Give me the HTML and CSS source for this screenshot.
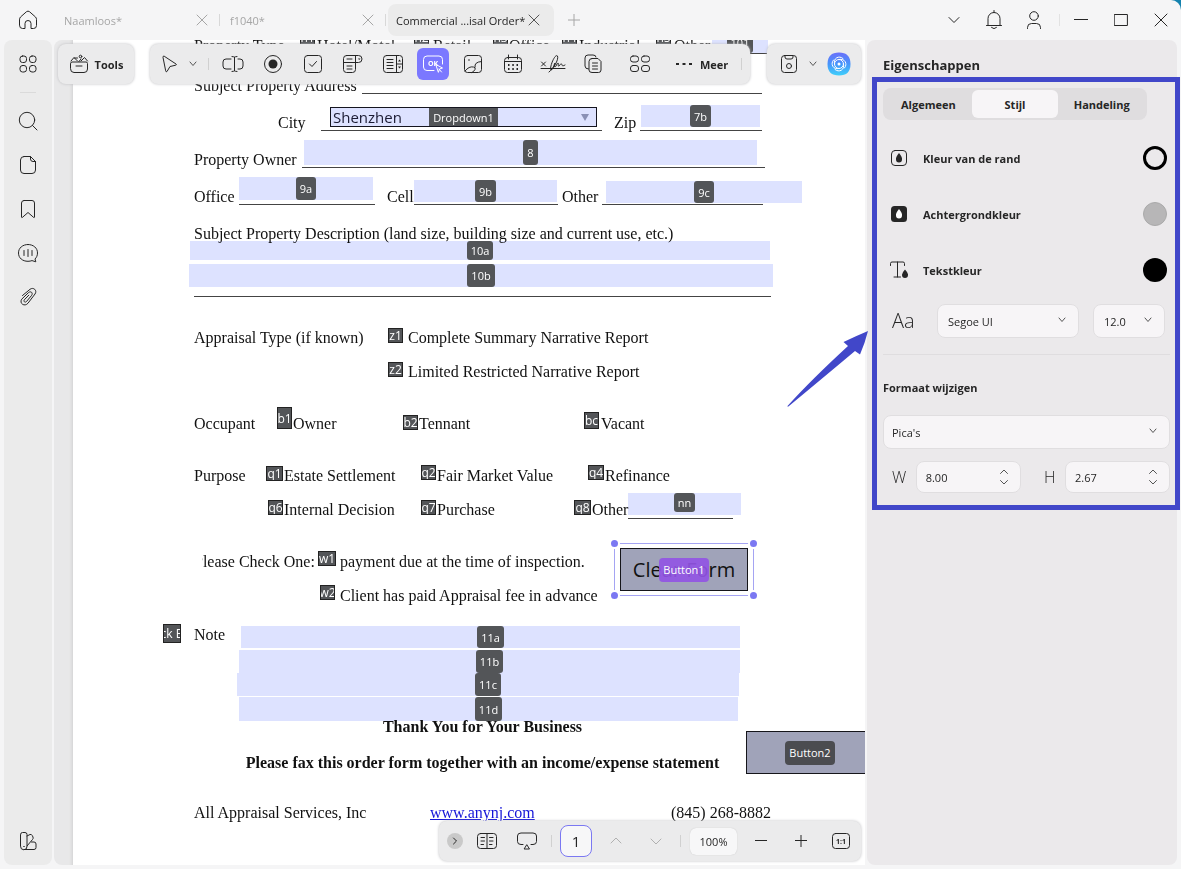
FILE: index.html
```html
<!DOCTYPE html>
<html lang="nl">
<head>
    <meta charset="UTF-8">
    <meta name="viewport" content="width=device-width, initial-scale=1.0">
    <title>Commercial Appraisal Order</title>
    <link rel="stylesheet" href="styles.css">
</head>
<body>
    <div class="window">
        <header class="titlebar">
            <button class="icon-btn home" aria-label="Home">
                <svg width="20" height="20" viewBox="0 0 20 20"><path d="M1.500 9.500Q1.500 8 2.500 7L8.500 1.700q1.500-1.200 3 0L17.500 7q1 1 1 2.500V15.500q0 3-3 3H13V13.500a3 3 0 0 0-6 0V18.500H4.500q-3 0-3-3z"/></svg>
            </button>
            <nav class="tabs">
                <div class="tab first"><span>Naamloos*</span><button aria-label="Sluiten"><svg width="12" height="12" viewBox="0 0 12 12"><path d="M1 1l10 10M11 1L1 11"/></svg></button></div>
                <div class="tab"><span>f1040*</span><button aria-label="Sluiten"><svg width="12" height="12" viewBox="0 0 12 12"><path d="M1 1l10 10M11 1L1 11"/></svg></button></div>
                <div class="tab active"><span>Commercial ...isal Order*</span><button aria-label="Sluiten"><svg width="12" height="12" viewBox="0 0 12 12"><path d="M1 1l10 10M11 1L1 11"/></svg></button></div>
                <button class="new-tab" aria-label="Nieuw tabblad"><svg width="12" height="12" viewBox="0 0 12 12"><path d="M6 0v12M0 6h12"/></svg></button>
            </nav>
            <div class="window-actions">
                <button class="icon-btn" aria-label="Meer"><svg width="12" height="12" viewBox="0 0 12 12"><path d="M1 3.500l5 5 5-5"/></svg></button>
                <button class="icon-btn" aria-label="Meldingen"><svg width="18" height="20" viewBox="0 0 18 20"><path d="M9 .5v2M3 15V8.500a6 6 0 0 1 12 0V15M1.500 15.500h15M6.500 17.500q2.500 2.500 5 0"/></svg></button>
                <button class="icon-btn" aria-label="Account"><svg width="16" height="20" viewBox="0 0 16 20"><circle cx="8" cy="6" r="4.300"/><path d="M1.500 18.500v-1q0-4 4-4h5q4 0 4 4v1"/></svg></button>
                <span class="sep"></span>
                <button class="icon-btn" aria-label="Minimaliseren"><svg width="14" height="14" viewBox="0 0 14 14"><path d="M0 6.500h14"/></svg></button>
                <button class="icon-btn" aria-label="Maximaliseren"><svg width="14" height="14" viewBox="0 0 14 14"><path d="M.6 1.500h12.800v11H.6z"/></svg></button>
                <button class="icon-btn" aria-label="Venster sluiten"><svg width="14" height="14" viewBox="0 0 14 14"><path d="M1 1l12 12M13 1L1 13"/></svg></button>
            </div>
        </header>

        <main class="workspace">
            <aside class="sidebar">
                <button class="side-btn" aria-label="Overzicht"><svg width="18" height="18" viewBox="0 0 18 18"><rect x="1" y="1" width="6.500" height="6.500" rx="2.500"/><rect x="10.500" y="1" width="6.500" height="6.500" rx="2.500"/><rect x="1" y="10.500" width="6.500" height="6.500" rx="2.500"/><rect x="10.500" y="10.500" width="6.500" height="6.500" rx="2.500"/></svg></button>
                <span class="side-sep"></span>
                <button class="side-btn" aria-label="Zoeken"><svg width="20" height="20" viewBox="0 0 20 20"><circle cx="9" cy="9" r="7.700"/><path d="M14.500 14.500l4.500 4.500"/></svg></button>
                <button class="side-btn" aria-label="Pagina's"><svg width="18" height="20" viewBox="0 0 18 20"><path d="M5 1.500h6.500l5 5V15q0 3.500-3.500 3.500H5Q1.500 18.500 1.500 15V5Q1.500 1.500 5 1.500zM11.500 1.500V4q0 2.500 2.500 2.500h2.500"/></svg></button>
                <button class="side-btn" aria-label="Bladwijzers"><svg width="16" height="20" viewBox="0 0 16 20"><path d="M4 1.500h8q2.500 0 2.500 2.500v14q0 1-1 .3L8 13.500l-5.500 4.800q-1 .7-1-.3V4Q1.500 1.500 4 1.500z"/></svg></button>
                <button class="side-btn" aria-label="Opmerkingen"><svg width="22" height="20" viewBox="0 0 22 20"><path d="M11 1.500c5.500 0 9.500 3.500 9.500 8.500 0 2.500-1 4.500-2.500 6l.8 2.800-3.800-1.200q-1.800.7-4 .7C5.500 18.300 1.500 15 1.500 10S5.500 1.500 11 1.500zM7 7.500v5M11 6.500v7M15 7.500v5"/></svg></button>
                <button class="side-btn" aria-label="Bijlagen"><svg width="18" height="20" viewBox="0 0 18 20"><path d="M3.500 8.500L11 2.300c3.500-2.600 7.500 1.200 5 4.700L9 16.200c-3.300 4-9 .3-6.300-4L9.500 5.600c2.300-1.900 4.800.2 3.200 2.700l-5.200 6.200c-1.500 1.500-3.200 0-2.200-1.700l4.500-4.600"/></svg></button>
                <button class="side-btn bottom" aria-label="Thema"><svg width="18" height="20" viewBox="0 0 18 20"><path d="M1.500 3.500q0-2 2-2h2.500q2 0 2 2v12a3 3 0 0 1-6.500 0zM8 5l3-1.500q1.500-.5 2.200 1L14 6q.5 1.500-.5 2.500L8 15M12.500 11h2.500q2 0 2 2v3.500q0 2-2 2H5M4.700 15.500h.6"/></svg></button>
            </aside>

            <section class="viewer">
                <article class="page">
                    <div class="row row-kind"><span>Property Type</span><span>Hotel/Motel</span><span>Retail</span><span>Office</span><span>Industrial</span><span>Other</span></div>
                    <div class="row row-address"><span>Subject Property Address</span><span class="blank"></span></div>
                    <div class="row row-city"><span>City</span><span class="blank gap-wide"></span><span>Zip</span><span class="blank"></span></div>
                    <div class="row row-owner"><span>Property Owner</span><span class="blank"></span></div>
                    <div class="row row-office"><span>Office</span><span class="blank gap-wide"></span><span>Cell</span><span class="blank gap-small"></span><span>Other</span><span class="blank"></span></div>
                    <div class="row"><span>Subject Property Description (land size, building size and current use, etc.)</span></div>
                    <div class="rule"></div>

                    <div class="group">
                        <div class="row row-type"><span>Appraisal Type (if known)</span><span>Complete Summary Narrative Report</span></div>
                        <div class="row row-type"><span></span><span>Limited Restricted Narrative Report</span></div>
                    </div>
                    <div class="group">
                        <div class="row row-occupant"><span>Occupant</span><span>Owner</span><span>Tennant</span><span>Vacant</span></div>
                    </div>
                    <div class="group">
                        <div class="row row-purpose"><span>Purpose</span><span>Estate Settlement</span><span>Fair Market Value</span><span>Refinance</span></div>
                        <div class="row row-other"><span></span><span>Internal Decision</span><span>Purchase</span><span>Other</span><span class="blank"></span></div>
                    </div>
                    <div class="group">
                        <div class="row row-pay"><span class="cut">Please Check One:</span><span>payment due at the time of inspection.</span></div>
                        <div class="row row-pay"><span></span><span>Client has paid Appraisal fee in advance</span></div>
                    </div>
                    <div class="row note"><span>Note</span></div>
                    <div class="closing">
                        <p class="thanks">Thank You for Your Business</p>
                        <p class="fax">Please fax this order form together with an income/expense statement</p>
                    </div>
                    <div class="row row-contact"><span>All Appraisal Services, Inc</span><span><a href="#">www.anynj.com</a></span><span>(845) 268-8882</span></div>

                    <!-- form fields, placed on the page canvas -->
                    <label class="check c-hotel"><input type="checkbox"><span>h1</span></label>
                    <label class="check c-retail"><input type="checkbox"><span>h2</span></label>
                    <label class="check c-office"><input type="checkbox"><span>h3</span></label>
                    <label class="check c-industrial"><input type="checkbox"><span>h4</span></label>
                    <label class="check c-otherkind"><input type="checkbox"><span>h5</span></label>
                    <label class="field f-kind"><input type="text"><span class="tag">101</span></label>
                    <label class="field f-city"><select><option>Shenzhen</option></select><span class="tag">Dropdown1</span><svg width="10" height="8" viewBox="0 0 10 8"><path d="M1 0h8L5 7z"/></svg></label>
                    <label class="field f-7b"><input type="text"><span class="tag">7b</span></label>
                    <label class="field f-8"><input type="text"><span class="tag">8</span></label>
                    <label class="field f-9a"><input type="text"><span class="tag">9a</span></label>
                    <label class="field f-9b"><input type="text"><span class="tag">9b</span></label>
                    <label class="field f-9c"><input type="text"><span class="tag">9c</span></label>
                    <label class="field f-10a"><input type="text"><span class="tag">10a</span></label>
                    <label class="field f-10b"><input type="text"><span class="tag">10b</span></label>
                    <label class="check c-z1"><input type="checkbox"><span>z1</span></label>
                    <label class="check c-z2"><input type="checkbox"><span>z2</span></label>
                    <label class="check c-b1"><input type="checkbox"><span>b1</span></label>
                    <label class="check c-b2"><input type="checkbox"><span>b2</span></label>
                    <label class="check c-bc"><input type="checkbox"><span>bc</span></label>
                    <label class="check c-q1"><input type="checkbox"><span>q1</span></label>
                    <label class="check c-q2"><input type="checkbox"><span>q2</span></label>
                    <label class="check c-q4"><input type="checkbox"><span>q4</span></label>
                    <label class="check c-q6"><input type="checkbox"><span>q6</span></label>
                    <label class="check c-q7"><input type="checkbox"><span>q7</span></label>
                    <label class="check c-q8"><input type="checkbox"><span>q8</span></label>
                    <label class="field f-nn"><input type="text"><span class="tag">nn</span></label>
                    <label class="check c-w1"><input type="checkbox"><span>w1</span></label>
                    <label class="check c-w2"><input type="checkbox"><span>w2</span></label>
                    <label class="check c-note"><input type="checkbox"><span>ck B</span></label>
                    <label class="field f-11a"><input type="text"><span class="tag">11a</span></label>
                    <label class="field f-11b"><input type="text"><span class="tag">11b</span></label>
                    <label class="field f-11c"><input type="text"><span class="tag">11c</span></label>
                    <label class="field f-11d"><input type="text"><span class="tag">11d</span></label>
                    <div class="selection">
                        <button class="form-button">Clear Form</button>
                        <span class="button-tag selected">Button1</span>
                        <i class="handle nw"></i><i class="handle ne"></i><i class="handle sw"></i><i class="handle se"></i>
                    </div>
                    <div class="button-two">
                        <button class="form-button" aria-label="Button2"></button>
                        <span class="button-tag">Button2</span>
                    </div>
                </article>

                <div class="toolbars">
                    <button class="bar tools-button">
                        <svg width="20" height="20" viewBox="0 0 20 20"><path d="M1.500 9.500q0-1.500 1.500-1.500h14q1.500 0 1.500 1.500V15q0 3.500-3.500 3.500H5Q1.500 18.500 1.500 15zM7 12h6M2 7l3-3.500L8.500 7M5.500 4h3M12 7l3.500-3.500L18.500 7M10 7.500L12 5"/><circle cx="11.500" cy="2.500" r="1.300"/></svg>
                        <span>Tools</span>
                    </button>
                    <div class="bar form-tools">
                        <button class="pick" aria-label="Selecteren"><svg width="16" height="18" viewBox="0 0 16 18"><path d="M1 2q0-1.500 1.200-.8L14 9q1 .8-.3 1.200L8 11.500l-3 5q-.8 1-1.200-.3z"/></svg></button>
                        <button class="pick-more" aria-label="Meer selectie"><svg width="8" height="8" viewBox="0 0 8 8"><path d="M1 2l3 3.500L7 2"/></svg></button>
                        <span class="sep"></span>
                        <button class="tool" aria-label="Tekstveld"><svg width="22" height="18" viewBox="0 0 22 18"><path d="M9 4H4Q1 4 1 7v4q0 3 3 3h5M16 4h2q3 0 3 3v4q0 3-3 3h-2M12.500 2v14M10 1.500q2 0 2.500 1 .5-1 2.500-1M10 16.500q2 0 2.500-1 .5 1 2.500 1"/></svg></button>
                        <button class="tool" aria-label="Keuzerondje"><svg width="20" height="20" viewBox="0 0 20 20"><circle cx="10" cy="10" r="8.500"/><circle class="solid" cx="10" cy="10" r="4.500"/></svg></button>
                        <button class="tool" aria-label="Selectievakje"><svg width="18" height="18" viewBox="0 0 18 18"><rect x=".5" y=".5" width="17" height="17" rx="3"/><path d="M5.500 9l2.500 2.500L12.500 6.500"/></svg></button>
                        <button class="tool" aria-label="Vervolgkeuzelijst"><svg width="22" height="20" viewBox="0 0 22 20"><path d="M4.500 1.500h12a3.500 3.500 0 0 1 0 7H1.500M13.500 8.500v7q0 3-3 3h-6q-3 0-3-3v-11q0-3 3-3M13.500 1.500v7M5 5h5M5 12h5M5 15h5"/><path class="solid" d="M16 4.500h2.500L17.200 6z"/></svg></button>
                        <button class="tool" aria-label="Keuzelijst"><svg width="20" height="20" viewBox="0 0 20 20"><rect x=".5" y="1.500" width="19" height="17" rx="3"/><path d="M13.500 1.500v17M4 5.500H10M4 8.500H10M4 11.500H10M4 14.500H10M13.500 10h6"/><path class="solid" d="M15 7.500h3l-1.500-2zM15 12.500h3l-1.500 2z"/></svg></button>
                        <button class="tool on" aria-label="Drukknop"><svg width="22" height="20" viewBox="0 0 22 20"><path d="M12 16.500H5q-3.500 0-3.500-3.500V5.500Q1.500 2 5 2h12q3.500 0 3.500 3.500V10M14 10.500l6.500 3.500-3 1-1 3zM17 15l2.500 3"/><text x="6" y="12">OK</text></svg></button>
                        <button class="tool" aria-label="Afbeelding"><svg width="20" height="20" viewBox="0 0 20 20"><rect x="1.500" y="1.500" width="17" height="17" rx="3"/><path d="M2 17q4-5 8.500-4 2.500.5 1.500 2.500t-3 3M12 13Q11 8 18.500 7.500M5.500 6h1"/></svg></button>
                        <button class="tool" aria-label="Datum"><svg width="20" height="20" viewBox="0 0 20 20"><rect x="1.500" y="3.500" width="17" height="15" rx="3"/><path d="M1.500 7.500h17M5.500 1v4M14.500 1v4"/><path class="dots" d="M5 11h1.500M9.300 11h1.500M13.500 11H15M5 15h1.500M9.300 15h1.500M13.500 15H15"/></svg></button>
                        <button class="tool" aria-label="Handtekening"><svg width="26" height="20" viewBox="0 0 26 20"><path d="M1 14.500h24M1.500 8l4 4M5.500 8l-4 4M9 18c4-3 10-12 8.500-16C15-1 9 14 11 16c2 0 3-6 4-7-.5 3-1 4 0 4s2-4 3-4-.5 4 1 3 1.500-3 2.500-2 0 3 3.500 1"/></svg></button>
                        <button class="tool" aria-label="Kopieën"><svg width="18" height="20" viewBox="0 0 18 20"><path d="M4.500 15Q1 15 1 12V4q0-3 3-3h5q3 0 3 2"/><path d="M8 4.500h6l3 3V16q0 2.500-2.500 2.500H8Q5 18.500 5 16V7.500Q5 4.500 8 4.500zM8.500 9h5M8.500 12h5M8.500 15h5"/></svg></button>
                        <button class="tool spaced" aria-label="Veldraster"><svg width="20" height="18" viewBox="0 0 20 18"><rect x=".5" y="1" width="8" height="6" rx="2.500"/><rect x="11.500" y="1" width="8" height="6" rx="2.500"/><rect x=".5" y="10.500" width="8" height="6" rx="2.500"/><rect x="11.500" y="10.500" width="8" height="6" rx="2.500"/></svg></button>
                        <button class="more"><svg width="16" height="4" viewBox="0 0 16 4"><path class="solid" d="M0 1h3v2H0zM6.500 1h3v2h-3zM13 1h3v2h-3z"/></svg><span>Meer</span></button>
                        <span class="sep last"></span>
                    </div>
                    <div class="bar save-tools">
                        <button aria-label="Opslaan"><svg width="18" height="20" viewBox="0 0 18 20"><path d="M4.500 1.500h9q3 0 3 3v11q0 3-3 3h-9q-3 0-3-3v-11q0-3 3-3zM5 2v1q0 2 2 2h4q2 0 2-2V2"/><circle cx="9" cy="12" r="2.500"/></svg></button>
                        <button aria-label="Opslaan opties"><svg width="8" height="8" viewBox="0 0 8 8"><path d="M1 2l3 3.500L7 2"/></svg></button>
                        <button class="assistant" aria-label="Assistent"><svg width="24" height="24" viewBox="0 0 24 24">
                            <defs><linearGradient id="ai" x1="0" y1="0" x2="0" y2="1"><stop offset="0" stop-color="#6b70fa"/><stop offset=".5" stop-color="#4795fb"/><stop offset="1" stop-color="#3fd0fa"/></linearGradient></defs>
                            <path class="blob" d="M12 .5Q23.500.5 23.500 12T12 23.500.5 12 12 .5z"/>
                            <g class="swirl"><path d="M7.500 12C6 6 12 3 16 6.500M12 7.500C18 6 21 12 17.500 16M16.500 12C18 18 12 21 8 17.500M12 16.500C6 18 3 12 6.500 8"/><circle cx="12" cy="12" r="4.500"/></g>
                            <circle cx="12" cy="12" r="1.500" fill="#fff" stroke="none"/></svg></button>
                    </div>
                </div>

                <div class="bar page-bar">
                    <button class="expand" aria-label="Uitklappen"><svg width="8" height="8" viewBox="0 0 8 8"><path d="M2.500 1l3 3-3 3"/></svg></button>
                    <button class="tool" aria-label="Weergave"><svg width="20" height="18" viewBox="0 0 20 18"><rect x=".5" y="1.500" width="19" height="15" rx="3"/><path d="M10 1.500v15M4 5.500h3.500M4 9h3.500M4 12.500h2.500M12.500 5.500H16M12.500 9H16M12.500 12.500H15"/></svg></button>
                    <button class="tool" aria-label="Presenteren"><svg width="20" height="20" viewBox="0 0 20 20"><path d="M6 13.500H4q-3.500 0-3.500-3V5q0-3 3.500-3h12q3.500 0 3.500 3v5.500q0 3-3.500 3h-2M10 14l2.500 4h-5z"/></svg></button>
                    <span class="sep"></span>
                    <input class="page-number" type="text" value="1" aria-label="Pagina">
                    <button class="tool faint" aria-label="Vorige"><svg width="12" height="10" viewBox="0 0 12 10"><path d="M1 7l5-5 5 5"/></svg></button>
                    <button class="tool faint" aria-label="Volgende"><svg width="12" height="10" viewBox="0 0 12 10"><path d="M1 3l5 5 5-5"/></svg></button>
                    <span class="sep"></span>
                    <button class="zoom">100%</button>
                    <button class="tool" aria-label="Uitzoomen"><svg width="12" height="12" viewBox="0 0 12 12"><path d="M0 5.500h12"/></svg></button>
                    <button class="tool" aria-label="Inzoomen"><svg width="12" height="12" viewBox="0 0 12 12"><path d="M0 5.500h12M6 0v12"/></svg></button>
                    <button class="tool ratio" aria-label="Werkelijke grootte"><svg width="18" height="18" viewBox="0 0 18 18"><rect x=".5" y="1.500" width="17" height="15" rx="3"/><text x="4" y="12">1:1</text></svg></button>
                </div>
            </section>

            <aside class="panel">
                <h2>Eigenschappen</h2>
                <div class="settings">
                    <div class="segmented">
                        <button>Algemeen</button>
                        <button class="current">Stijl</button>
                        <button>Handeling</button>
                    </div>
                    <div class="color-row">
                        <svg width="18" height="18" viewBox="0 0 18 18"><rect x="1.500" y="1.500" width="15" height="15" rx="3.500"/><path class="solid" d="M9 4q3.500 4 3 6.500a3 3 0 0 1-6 0Q5.500 8 9 4z"/></svg>
                        <span>Kleur van de rand</span>
                        <button class="swatch ring" aria-label="Kleur van de rand"></button>
                    </div>
                    <div class="color-row">
                        <svg width="18" height="18" viewBox="0 0 18 18"><rect class="solid" x="1" y="1" width="16" height="16" rx="3.500"/><path class="light" d="M9 4q3.500 4 3 6.500a3 3 0 0 1-6 0Q5.500 8 9 4z"/></svg>
                        <span>Achtergrondkleur</span>
                        <button class="swatch gray" aria-label="Achtergrondkleur"></button>
                    </div>
                    <div class="color-row">
                        <svg width="18" height="18" viewBox="0 0 18 18"><path d="M.5 4.500v-2Q.5 1 2 1h11q1.500 0 1.500 1.500v2M7.500 1v15M4 16h6.500"/><path class="solid" d="M15 8.500q3.300 3.500 3 5.500a3 3 0 0 1-6 0q-.3-2 3-5.500z"/></svg>
                        <span>Tekstkleur</span>
                        <button class="swatch black" aria-label="Tekstkleur"></button>
                    </div>
                    <div class="font-row">
                        <span class="aa">Aa</span>
                        <div class="select family"><select aria-label="Lettertype"><option>Segoe UI</option></select><svg width="8" height="8" viewBox="0 0 8 8"><path d="M1 2l3 3.500L7 2"/></svg></div>
                        <div class="select size"><select aria-label="Lettergrootte"><option>12.0</option></select><svg width="8" height="8" viewBox="0 0 8 8"><path d="M1 2l3 3.500L7 2"/></svg></div>
                    </div>
                    <h3>Formaat wijzigen</h3>
                    <div class="select unit"><select aria-label="Eenheid"><option>Pica's</option></select><svg width="8" height="8" viewBox="0 0 8 8"><path d="M1 2l3 3.500L7 2"/></svg></div>
                    <div class="size-row">
                        <label for="w">W</label>
                        <div class="stepper"><input id="w" type="text" value="8.00"><span><button aria-label="Breedte omhoog"><svg width="8" height="6" viewBox="0 0 8 6"><path d="M.5 4.500L4 1l3.500 3.500"/></svg></button><button aria-label="Breedte omlaag"><svg width="8" height="6" viewBox="0 0 8 6"><path d="M.5 1.500L4 5l3.500-3.500"/></svg></button></span></div>
                        <label for="h">H</label>
                        <div class="stepper"><input id="h" type="text" value="2.67"><span><button aria-label="Hoogte omhoog"><svg width="8" height="6" viewBox="0 0 8 6"><path d="M.5 4.500L4 1l3.500 3.500"/></svg></button><button aria-label="Hoogte omlaag"><svg width="8" height="6" viewBox="0 0 8 6"><path d="M.5 1.500L4 5l3.500-3.500"/></svg></button></span></div>
                    </div>
                    <svg class="arrow" width="84" height="80" viewBox="0 0 84 80"><path d="M1.500 77Q25 51 62 17L57.500 13Q70 7 82 2 79 14 74 25.500L69 22Q32 53 3 77 1.500 78.500 1.500 77z"/></svg>
                </div>
            </aside>
        </main>
    </div>
</body>
</html>
```
FILE: styles.css
```css
* {
    box-sizing: border-box;
}
body {
    margin: 0;
    background: #1482ae;
    font-family: "Open Sans", "Noto Sans", sans-serif;
    font-size: 11px;
    color: #262626;
}
button {
    display: flex;
    align-items: center;
    justify-content: center;
    padding: 0;
    border: 0;
    background: none;
    font: inherit;
    color: inherit;
}
input, select {
    margin: 0;
    padding: 0;
    border: 0;
    background: none;
    font: inherit;
    color: inherit;
    appearance: none;
}
svg {
    flex: none;
    fill: none;
    stroke: #262626;
    stroke-width: 1;
    stroke-linecap: round;
    stroke-linejoin: round;
}
svg .solid {
    fill: #262626;
    stroke: none;
}
.window {
    display: flex;
    flex-direction: column;
    height: 100vh;
    overflow: hidden;
    background: #f5f5f6;
    border-radius: 0 10px 0 0;
}

/* title bar */
.titlebar {
    display: flex;
    align-items: center;
    flex: none;
    height: 40px;
    padding-left: 8px;
}
.icon-btn {
    width: 40px;
    height: 40px;
}
.tabs {
    display: flex;
    align-items: center;
    flex: 1;
    padding-left: 8px;
}
.tab {
    display: flex;
    align-items: center;
    justify-content: space-between;
    width: 166px;
    height: 32px;
    padding: 0 11px 0 10px;
    border-right: 1px solid transparent;
    border-image: linear-gradient(transparent 10px, #d8d8d8 10px 22px, transparent 22px) 1;
    color: #a6a6a6;
    white-space: nowrap;
}
.tab.first {
    width: 164px;
    padding-left: 8px;
}
.tab svg, .new-tab svg {
    stroke: #a6a6a6;
}
.tab.active {
    margin-left: 2px;
    padding: 0 14px 0 8px;
    border: 0;
    border-radius: 8px;
    background: #ebebeb;
    color: #262626;
}
.tab.active svg {
    stroke: #555;
}
.new-tab {
    width: 40px;
    height: 32px;
}
.window-actions {
    display: flex;
    align-items: center;
}
.sep {
    flex: none;
    width: 1px;
    height: 12px;
    margin: 0 4px;
    background: #d0d0d0;
}
.window-actions .sep {
    margin: 0 1px 0 5px;
    background: #e2e2e2;
}

/* layout */
.workspace {
    display: flex;
    flex: 1;
    gap: 2px;
    min-height: 0;
    padding: 0 4px 4px;
}
.sidebar {
    display: flex;
    flex-direction: column;
    flex: none;
    width: 48px;
    padding: 2px 0;
    border-radius: 8px;
    background: #ebebeb;
}
.side-btn {
    height: 44px;
}
.side-btn.bottom {
    margin-top: auto;
}
.side-sep {
    height: 1px;
    margin: 6px 16px;
    background: #dadada;
}
.viewer {
    position: relative;
    flex: 1;
    min-width: 0;
    overflow: hidden;
    border-radius: 8px 0 0 8px;
    background: #e8e8e9;
}

/* document */
.page {
    position: relative;
    margin: -10px 0 0 19px;
    padding: 0 0 60px 121px;
    background: #fff;
    box-shadow: 0 0 4px #c4c4c4;
    font-family: "Liberation Serif", "Times New Roman", serif;
    font-size: 16px;
    color: #111;
}
.row {
    display: grid;
    align-items: center;
    height: 37px;
    white-space: nowrap;
}
.blank {
    height: 17px;
    border-bottom: 1px solid #444;
}
.gap-wide {
    margin-right: 12px;
}
.gap-small {
    margin-right: 4px;
}
.row-kind {
    grid-template-columns: 123px 116px 76px 70px 95px auto;
    padding-bottom: 6px;
}
.row-address {
    grid-template-columns: 168px 400px;
}
.row-city {
    grid-template-columns: 43px 293px 26px 122px;
    padding-left: 84px;
}
.row-owner {
    grid-template-columns: 108px 463px;
}
.row-office {
    grid-template-columns: 45px 148px 27px 148px 40px 161px;
}
.rule {
    width: 577px;
    height: 45px;
    margin-bottom: 24px;
    border-bottom: 1px solid #444;
}
.group {
    margin-bottom: 18px;
}
.group .row, .note, .row-contact, .closing p {
    height: 34px;
}
.row-type {
    grid-template-columns: 214px auto;
}
.row-occupant {
    grid-template-columns: 99px 126px 182px auto;
}
.row-purpose {
    grid-template-columns: 90px 153px 168px auto;
}
.row-other {
    grid-template-columns: 90px 153px 155px 36px 105px;
}
.row-pay {
    grid-template-columns: 146px auto;
}
.cut {
    clip-path: inset(0 0 0 8px);
}
.note {
    margin-top: -13px;
}
.closing {
    width: 577px;
    padding: 58px 0 14px;
    font-weight: bold;
    text-align: center;
    line-height: 34px;
}
.closing p {
    margin: 0 0 2px;
}
.row-contact {
    grid-template-columns: 236px 241px auto;
}
.page a {
    color: #1414d8;
}

/* form fields */
.field, .check {
    position: absolute;
    overflow: hidden;
    font-family: "Open Sans", "Noto Sans", sans-serif;
    font-size: 11px;
    color: #fff;
}
.field {
    display: flex;
    justify-content: center;
    background: #dde2ff;
    mix-blend-mode: multiply;
}
.field input, .field select {
    position: absolute;
    inset: 0;
    width: 100%;
    height: 100%;
    color: #1b1b33;
}
.tag {
    position: relative;
    display: flex;
    align-items: center;
    padding: 0 4px;
    border-radius: 3px;
    background: #535558;
}
.check {
    display: flex;
    align-items: center;
    justify-content: center;
    width: 15px;
    height: 15px;
    border: 1px solid #222;
    background: #535558;
    font-size: 12px;
    white-space: nowrap;
}
.check input {
    position: absolute;
    inset: 0;
}
.c-hotel { left: 227px; top: 0; }
.c-retail { left: 341px; top: 0; }
.c-office { left: 420px; top: 0; }
.c-industrial { left: 489px; top: 0; }
.c-otherkind { left: 583px; top: 0; }
.f-kind { left: 639px; top: 2px; width: 56px; height: 22px; border-bottom: 1px solid #444; }
.f-city { left: 257px; top: 77px; width: 267px; height: 20px; border: 1px solid #15151f; }
.f-city select { padding-left: 2px; font-size: 15px; line-height: 18px; }
.f-city svg { position: absolute; right: 6px; top: 6px; fill: #8a90b5; stroke: none; }
.f-city .tag { border-radius: 0; }
.f-7b { left: 568px; top: 75px; width: 119px; height: 22px; }
.f-8 { left: 231px; top: 110px; width: 453px; height: 25px; }
.f-9a { left: 166px; top: 147px; width: 134px; height: 23px; }
.f-9b { left: 341px; top: 150px; width: 143px; height: 22px; }
.f-9c { left: 533px; top: 151px; width: 196px; height: 22px; }
.f-10a { left: 117px; top: 211px; width: 580px; height: 19px; }
.f-10b { left: 116px; top: 234px; width: 584px; height: 23px; }
.c-z1 { left: 315px; top: 298px; }
.c-z2 { left: 315px; top: 332px; }
.c-b1 { left: 204px; top: 377px; height: 22px; }
.c-b2 { left: 330px; top: 385px; }
.c-bc { left: 511px; top: 382px; height: 17px; }
.c-q1 { left: 193px; top: 436px; width: 17px; }
.c-q2 { left: 348px; top: 435px; }
.c-q4 { left: 515px; top: 435px; width: 16px; }
.c-q6 { left: 195px; top: 470px; }
.c-q7 { left: 348px; top: 470px; }
.c-q8 { left: 501px; top: 470px; width: 17px; }
.f-nn { left: 555px; top: 463px; width: 113px; height: 22px; }
.f-nn .tag { height: 19px; }
.c-w1 { left: 245px; top: 521px; width: 18px; }
.c-w2 { left: 247px; top: 555px; }
.c-note { left: 90px; top: 594px; width: 18px; height: 19px; }
.f-11a { left: 168px; top: 596px; width: 499px; height: 22px; }
.f-11b { left: 166px; top: 620px; width: 501px; height: 23px; }
.f-11c { left: 164px; top: 643px; width: 502px; height: 23px; }
.f-11d { left: 166px; top: 667px; width: 499px; height: 24px; }
.selection, .button-two {
    position: absolute;
    display: grid;
    place-items: center;
    font-family: "Open Sans", "Noto Sans", sans-serif;
}
.form-button, .button-tag {
    grid-area: 1 / 1;
}
.selection {
    left: 541px;
    top: 513px;
    padding: 4px 5px;
    border: 1px solid #a5a4f3;
}
.button-two {
    left: 673px;
    top: 701px;
}
.form-button {
    width: 128px;
    height: 43px;
    border: 1px solid #15151a;
    background: #a0a3b9;
    font-size: 20px;
    color: #111;
}
.button-tag {
    padding: 4px;
    border-radius: 4px;
    background: #4b4c50;
    font-size: 11px;
    line-height: 16px;
    color: #fff;
}
.button-tag.selected {
    background: #9254e4ea;
}
.handle {
    position: absolute;
    width: 11px;
    height: 11px;
    border: 2px solid #fff;
    border-radius: 50%;
    background: #7b78f2;
}
.nw { left: -6px; top: -6px; }
.ne { right: -6px; top: -6px; }
.sw { left: -6px; bottom: -6px; }
.se { right: -6px; bottom: -6px; }

/* floating bars */
.bar {
    display: flex;
    align-items: center;
    height: 40px;
    border-radius: 8px;
    background: #ebebec;
    box-shadow: 0 0 3px #bdbdc0;
}
.toolbars {
    position: absolute;
    left: 4px;
    right: 4px;
    top: 4px;
    display: flex;
    gap: 16px;
}
.tools-button {
    gap: 6px;
    width: 76px;
    font-weight: 700;
}
.form-tools {
    width: 600px;
    padding: 0 8px;
}
.pick {
    width: 24px;
    height: 32px;
}
.pick-more {
    width: 22px;
    height: 32px;
}
.tool {
    width: 32px;
    height: 32px;
    margin: 0 4px;
    border-radius: 6px;
}
.spaced {
    margin-left: 11px;
}
.tool.on {
    background: #7b78ff;
}
.tool.on path {
    stroke: #fff;
}
.tool text {
    font-family: "Open Sans", sans-serif;
    font-size: 7px;
    font-weight: 700;
    fill: #fff;
    stroke: none;
}
.tool .dots {
    stroke-width: 2;
    stroke-linecap: butt;
}
.more {
    gap: 8px;
    margin-left: 16px;
    font-weight: 700;
}
.sep.last {
    margin: 0 0 0 auto;
}
.save-tools {
    justify-content: space-between;
    width: 94px;
    margin-left: auto;
    padding: 0 10px 0 13px;
}
.blob {
    fill: url(#ai);
    stroke: none;
}
.swirl {
    stroke: #fff;
}
.page-bar {
    position: absolute;
    right: 4px;
    bottom: 4px;
    padding-left: 8px;
}
.expand {
    width: 16px;
    height: 16px;
    margin-right: 4px;
    border-radius: 50%;
    background: #c9c9c9;
}
.page-number {
    width: 32px;
    height: 32px;
    margin: 0 4px;
    border: 1px solid #7b78f2;
    border-radius: 8px;
    background: #f7f7f8;
    font-size: 15px;
    text-align: center;
}
.faint svg {
    stroke: #b0b0b0;
}
.zoom {
    width: 47px;
    height: 27px;
    margin: 0 4px 0 5px;
    border-radius: 6px;
    background: #f7f7f8;
    box-shadow: 0 0 1px #bbb;
}
.ratio text {
    fill: #262626;
}

/* properties panel */
.panel {
    flex: none;
    width: 310px;
    border-radius: 8px;
    background: #ebe9eb;
}
h2 {
    margin: 0;
    padding: 16px 16px 3px;
    font-size: 13px;
    line-height: 18px;
}
.settings {
    position: relative;
    margin: 0 -3px 0 5px;
    padding: 6px 5px 12px 6px;
    border: 5px solid #4147c9;
}
.segmented {
    display: flex;
    width: 264px;
    padding: 2px;
    border-radius: 8px;
    background: #dfdddf;
    font-weight: 700;
}
.segmented button {
    flex: 1;
    height: 28px;
    border-radius: 6px;
}
.segmented .current {
    background: #f7f5f7;
}
.color-row {
    display: flex;
    align-items: center;
    gap: 15px;
    height: 56px;
    padding: 0 3px 0 7px;
    font-weight: 700;
}
.segmented + .color-row {
    margin-top: 10px;
}
.swatch {
    width: 24px;
    height: 24px;
    margin-left: auto;
    border-radius: 50%;
}
.ring {
    border: 3px solid #000;
}
.gray {
    border: 1px solid #a9a9a9;
    background: #b7b6b7;
}
.black {
    background: #000;
}
.light {
    fill: #fff;
    stroke: none;
}
.font-row {
    display: flex;
    align-items: center;
    padding: 6px 5px 16px 9px;
    border-bottom: 1px solid #dfdddf;
}
.aa, .size-row label {
    font-weight: 300;
}
.aa {
    width: 45px;
    font-size: 20px;
    line-height: 34px;
}
.select {
    position: relative;
    height: 34px;
    border: 1px solid #e0dee0;
    border-radius: 8px;
    background: #f7f5f7;
}
.select select {
    width: 100%;
    height: 100%;
    padding: 0 10px;
}
.select svg {
    position: absolute;
    right: 12px;
    top: 11px;
    pointer-events: none;
}
.select svg, .stepper svg, .pick-more svg, .save-tools svg[width="8"] {
    stroke: #555;
}
.family {
    width: 142px;
}
.size {
    width: 72px;
    margin-left: auto;
}
h3 {
    margin: 24px 0 18px;
    font-size: 11px;
    font-weight: 700;
    line-height: 18px;
}
.unit select {
    padding: 0 8px;
}
.size-row {
    display: flex;
    align-items: center;
    justify-content: space-between;
    padding: 12px 0 0 9px;
}
.size-row label {
    font-size: 16px;
}
.size-row label + .stepper + label {
    margin-left: 14px;
}
.stepper {
    display: flex;
    align-items: center;
    width: 105px;
    height: 32px;
    padding: 0 12px 0 9px;
    border: 1px solid #e0dee0;
    border-radius: 8px;
    background: #f7f5f7;
}
.stepper input {
    flex: 1;
    min-width: 0;
}
.stepper span {
    display: grid;
    gap: 4px;
}
.arrow {
    position: absolute;
    left: -91px;
    top: 247px;
    fill: #4147c9;
    stroke: none;
}
```
